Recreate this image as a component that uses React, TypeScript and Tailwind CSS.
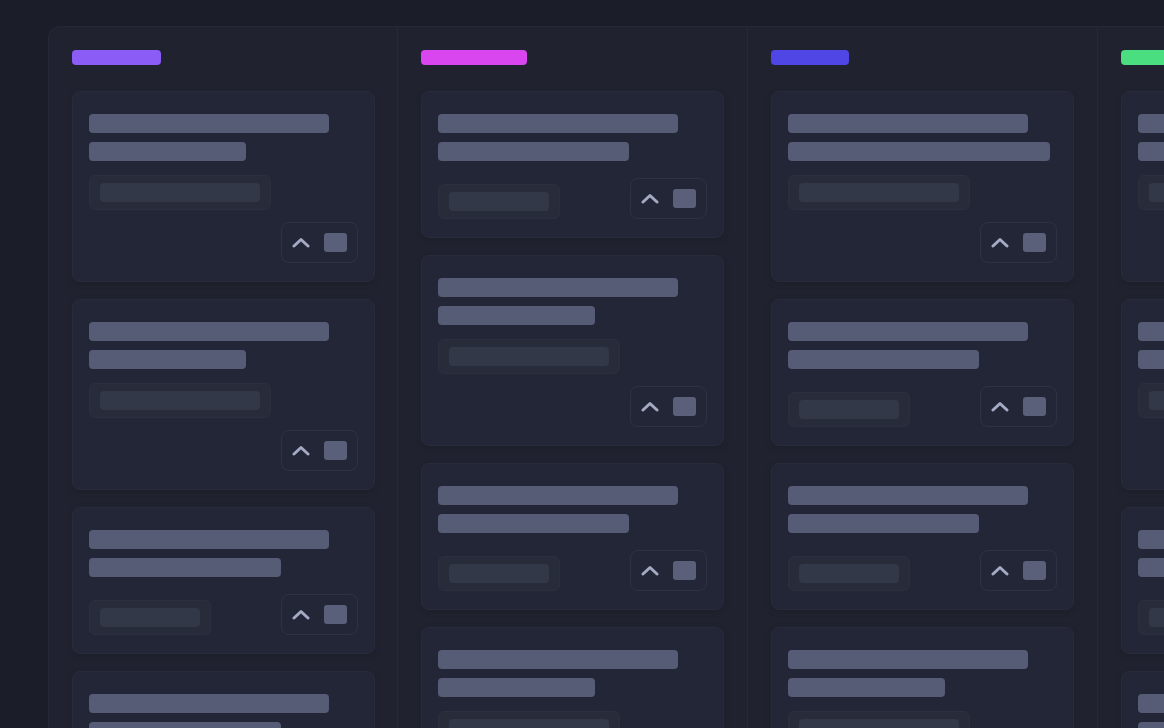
import React from 'react'

type Card = { second: number; wide: boolean }

type Column = { color: string; barW: string; cards: Card[] }

const columns: Column[] = [
  {
    color: 'bg-[#8b5cf6]',
    barW: 'w-[89px]',
    cards: [
      { second: 157, wide: true },
      { second: 157, wide: true },
      { second: 192, wide: false },
      { second: 192, wide: true },
    ],
  },
  {
    color: 'bg-[#d946ef]',
    barW: 'w-[106px]',
    cards: [
      { second: 191, wide: false },
      { second: 157, wide: true },
      { second: 191, wide: false },
      { second: 157, wide: true },
    ],
  },
  {
    color: 'bg-[#4f46e5]',
    barW: 'w-[78px]',
    cards: [
      { second: 262, wide: true },
      { second: 191, wide: false },
      { second: 191, wide: false },
      { second: 157, wide: true },
    ],
  },
  {
    color: 'bg-[#4ade80]',
    barW: 'w-[90px]',
    cards: [
      { second: 157, wide: true },
      { second: 157, wide: true },
      { second: 191, wide: false },
      { second: 191, wide: true },
    ],
  },
]

function Chevron() {
  return (
    <svg width="18" height="11" viewBox="0 0 18 11" fill="none" className="shrink-0">
      <path d="M2 9 L9 2.5 L16 9" stroke="#a4aac4" strokeWidth="3" strokeLinecap="round" strokeLinejoin="round" />
    </svg>
  )
}

function VoteButton() {
  return (
    <div className="flex h-[41px] w-[77px] shrink-0 items-center justify-between rounded-lg border border-[#2e3244] px-[10px]">
      <Chevron />
      <div className="h-[19px] w-[23px] rounded-[3px] bg-[#5a607a]" />
    </div>
  )
}

function Chip({ wide }: { wide: boolean }) {
  return (
    <div className="rounded-md border border-[#2c2f3f] bg-[#282b3a] px-[10px] py-[7px]">
      <div className={`h-[19px] rounded bg-[#333849] ${wide ? 'w-[160px]' : 'w-[100px]'}`} />
    </div>
  )
}

function SkeletonCard({ card }: { card: Card }) {
  return (
    <div className="w-[303px] rounded-lg border border-[#282b3b] bg-[#232636] px-4 pt-[22px] pb-[18px] shadow-[0_2px_6px_rgba(0,0,0,0.15)]">
      <div className="h-[19px] w-[240px] rounded bg-[#565c76]" />
      <div className="mt-[9px] h-[19px] rounded bg-[#565c76]" style={{ width: card.second }} />
      {card.wide ? (
        <>
          <div className="mt-[14px] flex">
            <Chip wide />
          </div>
          <div className="mt-[12px] flex justify-end">
            <VoteButton />
          </div>
        </>
      ) : (
        <div className="mt-[17px] flex items-end justify-between">
          <Chip wide={false} />
          <VoteButton />
        </div>
      )}
    </div>
  )
}

export default function App() {
  return (
    <div className="h-[728px] w-[1164px] overflow-hidden bg-[#1b1e29] pl-12 pt-[26px]">
      <div className="flex h-[740px] rounded-tl-xl border-t border-l border-[#252836] bg-[#20232f]">
        {columns.map((col, i) => (
          <div
            key={i}
            className={`shrink-0 border-r border-[#262938] px-[23px] pt-[23px] ${i === 0 ? 'w-[349px]' : 'w-[350px]'}`}
          >
            <div className={`h-[15px] rounded ${col.barW} ${col.color}`} />
            <div className="mt-[26px] flex flex-col gap-[17px]">
              {col.cards.map((c, j) => (
                <SkeletonCard key={j} card={c} />
              ))}
            </div>
          </div>
        ))}
      </div>
    </div>
  )
}
